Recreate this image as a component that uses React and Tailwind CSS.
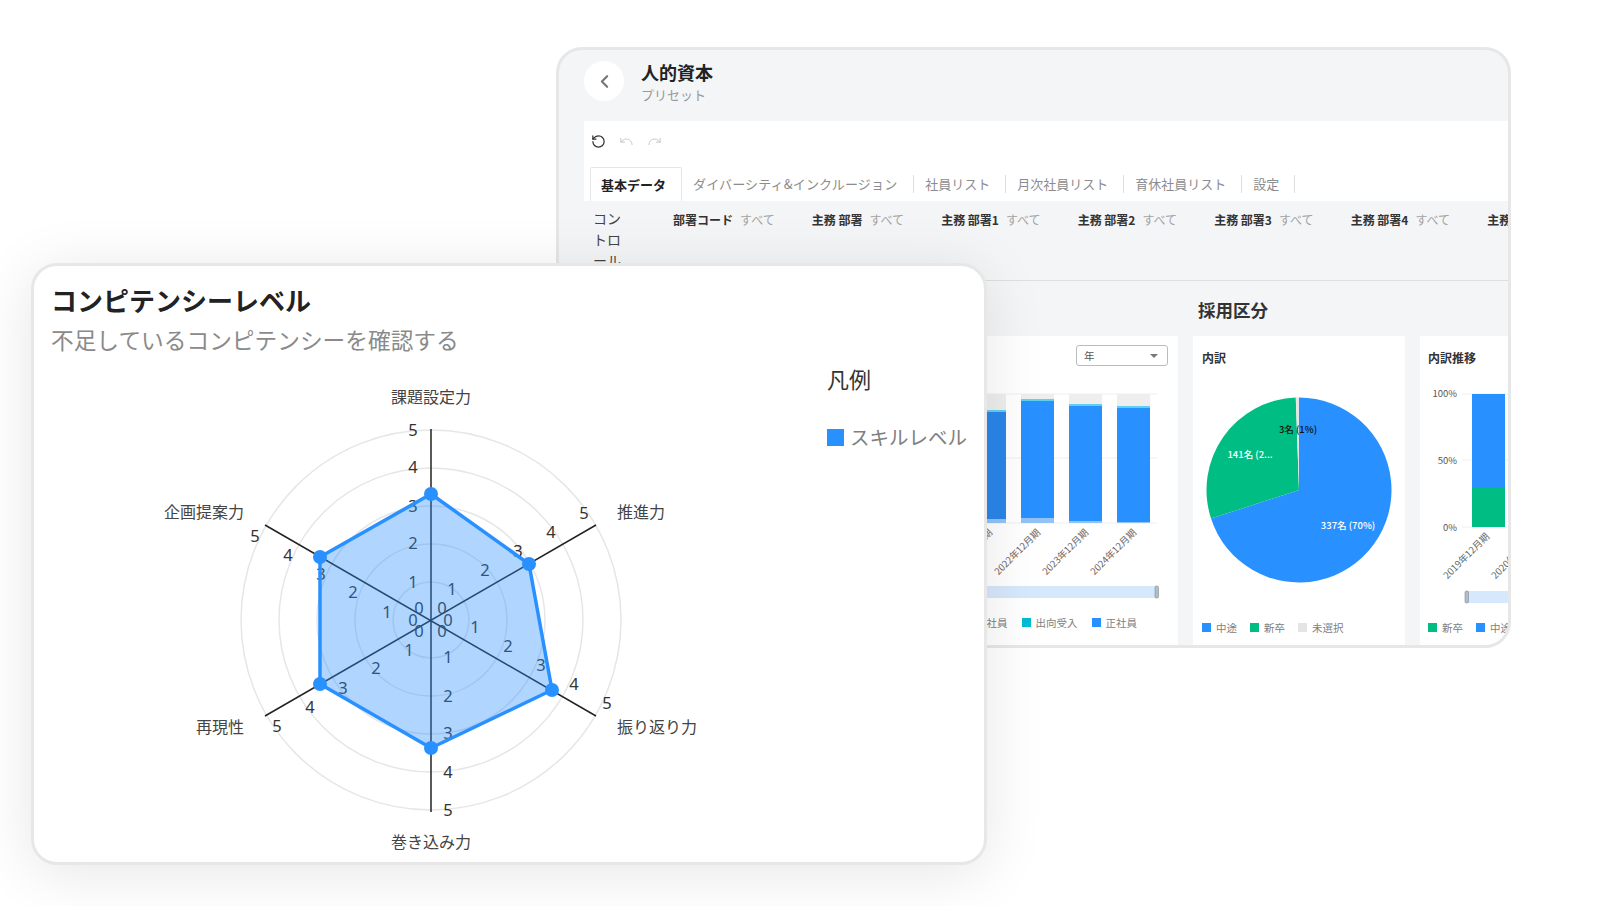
import { ChevronLeft, Redo, RotateCcw, Undo } from 'lucide-react';

const BLUE = '#2990ff';
const GREEN = '#00bd84';

const filters = ['部署コード', '主務 部署', '主務 部署1', '主務 部署2', '主務 部署3', '主務 部署4', '主務 部署5'];
const tabs = ['社員リスト', '月次社員リスト', '育休社員リスト', '設定'];

// radar tick labels, page coordinates
const ticks = [
  ['5', 413, 429], ['4', 413, 466], ['3', 413, 505], ['2', 413, 542], ['1', 413, 581], ['0', 419, 607],
  ['5', 584, 512], ['4', 551, 531], ['3', 518, 550], ['2', 485, 569], ['1', 452, 588], ['0', 442, 607],
  ['5', 607, 702], ['4', 574, 683], ['3', 541, 664], ['2', 508, 645], ['1', 475, 626], ['0', 448, 619],
  ['5', 448, 809], ['4', 448, 771], ['3', 448, 732], ['2', 448, 695], ['1', 448, 656], ['0', 442, 630],
  ['5', 277, 725], ['4', 310, 706], ['3', 343, 687], ['2', 376, 667], ['1', 409, 649], ['0', 419, 630],
  ['5', 255, 535], ['4', 288, 554], ['3', 321, 573], ['2', 353, 591], ['1', 387, 611], ['0', 413, 619],
];

const radarLabels = [
  ['課題設定力', 431, 396],
  ['推進力', 641, 511],
  ['振り返り力', 657, 726],
  ['巻き込み力', 431, 841],
  ['再現性', 220, 726],
  ['企画提案力', 204, 511],
];

const radarPoints = [[431, 494], [529, 564], [552, 690], [431, 748], [320, 684], [320, 557]];

function LegendItem({ color, label }) {
  return (
    <div className="flex items-center gap-[5px]">
      <span className="h-[9px] w-[9px]" style={{ backgroundColor: color }} />
      <span className="text-[10.5px] whitespace-nowrap text-[#808080]">{label}</span>
    </div>
  );
}

function Radar() {
  return (
    <svg viewBox="34 360 760 500" className="h-[500px] w-[760px] shrink-0">
      {[38, 76, 114, 152, 190].map((r) => (
        <circle key={r} cx="431" cy="620" r={r} fill="none" stroke="#e6e6e6" strokeWidth="1.5" />
      ))}
      <g stroke="#222" strokeWidth="1.5">
        <line x1="431" y1="429" x2="431" y2="812" />
        <line x1="265" y1="525" x2="596" y2="716" />
        <line x1="265" y1="716" x2="596" y2="525" />
      </g>
      <g fontSize="16.5" fill="#333" textAnchor="middle" dominantBaseline="central" className="font-['Noto_Sans',sans-serif]">
        {ticks.map(([t, x, y]) => (
          <text key={`${x}-${y}`} x={x} y={y}>{t}</text>
        ))}
      </g>
      <polygon
        points={radarPoints.map((p) => p.join(',')).join(' ')}
        fill={BLUE}
        fillOpacity="0.37"
        stroke={BLUE}
        strokeWidth="3.5"
        strokeLinejoin="round"
      />
      {radarPoints.map(([x, y]) => (
        <circle key={x + y} cx={x} cy={y} r="7" fill={BLUE} />
      ))}
      <g fontSize="16" fill="#444" textAnchor="middle" dominantBaseline="central">
        {radarLabels.map(([t, x, y]) => (
          <text key={t} x={x} y={y}>{t}</text>
        ))}
      </g>
    </svg>
  );
}

function BarChart() {
  const bars = [
    { x: 973, top: 412, low: 519, fill: '#2a86ea', label: '2021年12月期' },
    { x: 1021, top: 401, low: 518, fill: BLUE, label: '2022年12月期' },
    { x: 1069, top: 406, low: 521, fill: BLUE, label: '2023年12月期' },
    { x: 1117, top: 408, low: 522, fill: BLUE, label: '2024年12月期' },
  ];
  return (
    <svg viewBox="584 376 594 230" className="h-[230px] w-[594px] shrink-0">
      <g stroke="#eee">
        <line x1="960" y1="394" x2="1157" y2="394" />
        <line x1="960" y1="458" x2="1157" y2="458" />
        <line x1="960" y1="523" x2="1157" y2="523" />
      </g>
      {bars.map((b) => (
        <g key={b.x}>
          <rect x={b.x} y="394" width="33" height="129" fill="#eee" />
          <rect x={b.x} y={b.top - 2} width="33" height="2" fill="#5fd0f0" />
          <rect x={b.x} y={b.top} width="33" height={b.low - b.top} fill={b.fill} />
          <rect x={b.x} y={b.low} width="33" height={523 - b.low} fill="#93c3f5" />
          <text
            x={b.x + 20}
            y="533"
            fontSize="9.5"
            fill="#666"
            textAnchor="end"
            transform={`rotate(-45 ${b.x + 20} 533)`}
          >
            {b.label}
          </text>
        </g>
      ))}
      <rect x="960" y="586" width="197" height="12" fill="#d6e8fb" />
      <rect x="1155" y="586" width="3.5" height="12" rx="1.5" fill="#b4bcc6" stroke="#7f8a96" strokeWidth="0.6" />
    </svg>
  );
}

function polar(deg, r = 92.5) {
  const a = ((deg - 90) * Math.PI) / 180;
  return `${1299 + r * Math.cos(a)} ${490 + r * Math.sin(a)}`;
}

function slice(from, to) {
  const large = to - from > 180 ? 1 : 0;
  return `M1299 490 L${polar(from)} A92.5 92.5 0 ${large} 1 ${polar(to)} Z`;
}

function PieChart() {
  return (
    <svg viewBox="1193 376 212 230" className="h-[230px] w-[212px] shrink-0">
      <path d={slice(0, 252)} fill={BLUE} />
      <path d={slice(252, 358)} fill={GREEN} />
      <path d={slice(358, 360)} fill="#e5e5e5" />
      <g fontSize="9.5" fontWeight="500" textAnchor="middle" dominantBaseline="central">
        <text x="1298" y="429" fill="#111">3名 (1%)</text>
        <text x="1250" y="454" fill="#fff">141名 (2...</text>
        <text x="1348" y="525" fill="#fff">337名 (70%)</text>
      </g>
    </svg>
  );
}

function TrendChart() {
  return (
    <svg viewBox="1420 376 300 230" className="h-[230px] w-[300px] shrink-0">
      <g stroke="#eee">
        <line x1="1462" y1="394" x2="1720" y2="394" />
        <line x1="1462" y1="460" x2="1720" y2="460" />
        <line x1="1462" y1="527" x2="1720" y2="527" />
      </g>
      <g fontSize="9.5" fill="#555" textAnchor="end" dominantBaseline="central">
        <text x="1457" y="393">100%</text>
        <text x="1457" y="460">50%</text>
        <text x="1457" y="527">0%</text>
      </g>
      <rect x="1472" y="394" width="33" height="94" fill={BLUE} />
      <rect x="1472" y="488" width="33" height="39" fill={GREEN} />
      <text x="1490" y="537" fontSize="9.5" fill="#666" textAnchor="end" transform="rotate(-45 1490 537)">2019年12月期</text>
      <text x="1538" y="537" fontSize="9.5" fill="#666" textAnchor="end" transform="rotate(-45 1538 537)">2020年12月期</text>
      <rect x="1466" y="591" width="254" height="12" fill="#d6e8fb" />
      <rect x="1465" y="591" width="3.5" height="12" rx="1.5" fill="#b4bcc6" stroke="#7f8a96" strokeWidth="0.6" />
    </svg>
  );
}

function BackWindow() {
  return (
    <div className="absolute left-[556px] top-[47px] h-[601px] w-[955px] overflow-hidden rounded-[26px] border-[3px] border-[#e7e7e7] bg-[#f3f5f7]">
      <header className="flex h-[71px] gap-[17px] pl-[25px] pt-[11px]">
        <div className="flex h-10 w-10 items-center justify-center rounded-full bg-white">
          <ChevronLeft size={21} strokeWidth={2.5} className="text-[#777]" />
        </div>
        <div className="-mt-[1px]">
          <h1 className="text-[18px] leading-6 font-bold text-[#222]">人的資本</h1>
          <p className="mt-[1px] text-[13px] leading-5 text-[#999]">プリセット</p>
        </div>
      </header>

      <div className="ml-[25px] h-[80px] bg-white">
        <div className="flex h-[46px] items-center gap-[13px] pb-[5px] pl-[7px]">
          <RotateCcw size={15} strokeWidth={2} className="text-[#333]" />
          <Undo size={15} strokeWidth={1.5} className="text-[#c4c4c4]" />
          <Redo size={15} strokeWidth={1.5} className="text-[#c4c4c4]" />
        </div>
        <div className="flex h-[34px] pl-[6px]">
          <div className="flex w-[92px] items-center rounded-t-[2px] border border-b-0 border-[#e6e6e6] bg-white pl-[10px] text-[13px] font-bold text-[#222]">
            基本データ
          </div>
          <div className="flex items-center pb-[1px]">
            <span className="h-[18px] border-r border-[#ddd] pl-[11px] pr-[16px] text-[13px] leading-[18px] tracking-[0.15px] whitespace-nowrap text-[#8c8c8c]">
              ダイバーシティ&インクルージョン
            </span>
            {tabs.map((tab) => (
              <span key={tab} className="h-[18px] border-r border-[#ddd] pl-[11px] pr-[15px] text-[13px] leading-[18px] whitespace-nowrap text-[#8c8c8c]">
                {tab}
              </span>
            ))}
          </div>
        </div>
      </div>

      <div className="ml-[25px] flex h-[80px] overflow-hidden border-b border-[#dedede] pl-[9px] pt-[7px]">
        <div className="w-[28px] shrink-0 text-[14px] leading-[21px] text-[#444]">コントロール</div>
        <div className="ml-[52px] flex gap-[37px] pt-[4px]">
          {filters.map((f) => (
            <div key={f} className="flex gap-[7px] text-[12px] leading-4 whitespace-nowrap">
              <span className="font-bold text-[#333]">{f}</span>
              <span className="text-[#a3a3a3]">すべて</span>
            </div>
          ))}
        </div>
      </div>

      <h2 className="flex h-[55px] items-center pl-[639px] pt-[4px] text-[17.5px] font-bold text-[#333]">採用区分</h2>

      <div className="ml-[25px] flex h-[309px] gap-[15px]">
        <section className="flex w-[594px] shrink-0 flex-col bg-white">
          <div className="flex justify-end pr-[10px] pt-[9px]">
            <div className="flex h-[21px] w-[92px] items-center justify-between rounded-[3px] border border-[#bbb] pl-[7px] pr-[9px] text-[10.5px] text-[#555]">
              年
              <span className="h-0 w-0 border-x-[4px] border-t-[4px] border-x-transparent border-t-[#777]" />
            </div>
          </div>
          <div className="mt-[10px]">
            <BarChart />
          </div>
          <div className="mt-[9px] flex justify-end gap-[14px] pr-[41px]">
            <LegendItem color="#bbb" label="契約社員" />
            <LegendItem color="#00bcd4" label="出向受入" />
            <LegendItem color={BLUE} label="正社員" />
          </div>
        </section>

        <section className="flex w-[212px] shrink-0 flex-col bg-white">
          <h3 className="pl-[9px] pt-[13px] text-[12px] leading-[18px] font-bold text-[#333]">内訳</h3>
          <div className="mt-[9px]">
            <PieChart />
          </div>
          <div className="mt-[14px] flex gap-[13px] pl-[9px]">
            <LegendItem color={BLUE} label="中途" />
            <LegendItem color={GREEN} label="新卒" />
            <LegendItem color="#e5e5e5" label="未選択" />
          </div>
        </section>

        <section className="flex w-[300px] shrink-0 flex-col bg-white">
          <h3 className="pl-[8px] pt-[13px] text-[12px] leading-[18px] font-bold text-[#333]">内訳推移</h3>
          <div className="mt-[9px]">
            <TrendChart />
          </div>
          <div className="mt-[14px] flex gap-[13px] pl-[8px]">
            <LegendItem color={GREEN} label="新卒" />
            <LegendItem color={BLUE} label="中途" />
          </div>
        </section>
      </div>
    </div>
  );
}

function CompetencyCard() {
  return (
    <div className="absolute left-[31px] top-[263px] h-[602px] w-[956px] overflow-hidden rounded-[26px] border-[3px] border-[#e7e7e7] bg-white shadow-[0_8px_60px_rgba(0,0,0,0.1)]">
      <header className="h-[94px] pl-[17px] pt-[16px]">
        <h2 className="text-[26px] leading-[36px] font-bold text-[#222]">コンピテンシーレベル</h2>
        <p className="mt-[7px] text-[22.7px] leading-[30px] text-[#8a8a8a]">不足しているコンピテンシーを確認する</p>
      </header>
      <div className="flex">
        <Radar />
        <aside className="pl-[33px] pt-[2px]">
          <h3 className="text-[22px] leading-8 text-[#333]">凡例</h3>
          <div className="mt-[29px] flex items-center gap-[6px]">
            <span className="h-[17px] w-[17px] shrink-0" style={{ backgroundColor: BLUE }} />
            <span className="text-[19.5px] leading-7 whitespace-nowrap text-[#808080]">スキルレベル</span>
          </div>
        </aside>
      </div>
    </div>
  );
}

export default function App() {
  return (
    <div className="relative h-[906px] w-[1608px] overflow-hidden bg-white font-['Noto_Sans_CJK_JP','Noto_Sans',sans-serif]">
      <BackWindow />
      <CompetencyCard />
    </div>
  );
}
